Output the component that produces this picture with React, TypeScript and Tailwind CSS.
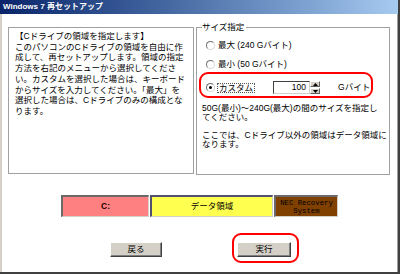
import { ReactNode } from "react"

const font = "font-['Liberation_Sans','Noto_Sans_CJK_JP',sans-serif]"

const leftLines = [
    "【Cドライブの領域を指定します】",
    "このパソコンのCドライブの領域を自由に作",
    "成して、再セットアップします。領域の指定",
    "方法を右記のメニューから選択してくださ",
    "い。カスタムを選択した場合は、キーボード",
    "からサイズを入力してください。「最大」を",
    "選択した場合は、Cドライブのみの構成とな",
    "ります。",
]

const Radio = ({ checked = false }: { checked?: boolean }) => (
    <span className="flex h-[9px] w-[9px] shrink-0 items-center justify-center rounded-full border border-t-[#707070] border-l-[#707070] border-b-[#d8d8d8] border-r-[#d8d8d8] bg-white">
        {checked && <span className="h-[3px] w-[3px] rounded-full bg-black" />}
    </span>
)

const RadioRow = ({ label }: { label: string }) => (
    <div className="ml-[4px] flex h-[12px] items-center gap-[3px]">
        <Radio />
        <span className="whitespace-nowrap">{label}</span>
    </div>
)

const Annotation = ({ className }: { className: string }) => (
    <span className={`pointer-events-none absolute rounded-[9px] border-2 border-[#ff0000] ${className}`} />
)

const Spinner = () => (
    <div className="flex h-[13px] w-[10px] flex-col gap-px">
        {[0, 1].map((i) => (
            <div
                key={i}
                className="flex flex-1 items-center justify-center border border-t-white border-l-white border-b-[#606060] border-r-[#606060] bg-[#d4d0c8]"
            >
                <svg width="5" height="3" viewBox="0 0 5 3">
                    <path d={i === 0 ? "M0 3 L2.5 0 L5 3 Z" : "M0 0 L5 0 L2.5 3 Z"} fill="#000" />
                </svg>
            </div>
        ))}
    </div>
)

const Block = ({ className, children }: { className: string, children: ReactNode }) => (
    <div className={`flex h-[22px] flex-col items-center justify-center border-t-2 border-l-2 border-b border-r border-b-[#d4d0c8] border-r-[#d4d0c8] ${className}`}>
        {children}
    </div>
)

const Button = ({ label, className = "" }: { label: string, className?: string }) => (
    <button className={`relative flex h-[15px] items-center justify-center border border-t-white border-l-white border-b-[#404040] border-r-[#404040] bg-[#d4d0c8] text-[8.5px] leading-none shadow-[inset_-1px_-1px_#808080] ${className}`}>
        {label}
    </button>
)

export default function App() {
    return (
        <div className={`flex h-[274px] w-[400px] flex-col overflow-hidden border-r-2 border-b-2 border-[#404040] bg-white text-black ${font}`}>
            <div className="flex h-[14px] shrink-0 items-center bg-gradient-to-r from-[#0a246a] to-[#a6caf0] pl-[3px] text-[8px] font-bold leading-none text-white">
                Windows 7 再セットアップ
            </div>

            <div className="flex flex-1 flex-col border-l-2 border-r border-l-[#d4d0c8] border-r-[#a0a0a0] pl-[6px] pt-[8px] text-[8.5px]">
                <div className="flex items-start gap-[2px]">
                    <div className="mt-[5px] h-[147px] w-[186px] border border-[#a0a0a0] pl-[6px] pt-[3px] leading-[10.7px]">
                        {leftLines.map((line) => (
                            <div key={line} className="whitespace-nowrap">{line}</div>
                        ))}
                    </div>

                    <fieldset className="h-[153px] w-[194px] border border-[#a0a0a0]">
                        <legend className="ml-[5px] pr-[2px] leading-[10px]">サイズ指定</legend>
                        <div className="flex flex-col pl-[5px]">
                            <div className="mt-[7px]">
                                <RadioRow label="最大 (240 Gバイト)" />
                            </div>
                            <div className="mt-[7px]">
                                <RadioRow label="最小 (50 Gバイト)" />
                            </div>

                            <div className="relative ml-[4px] mt-[11px] flex h-[13px] items-center">
                                <Annotation className="-left-[7px] -top-[9px] h-[26px] w-[174px]" />
                                <Radio checked />
                                <span className="ml-[2px] whitespace-nowrap border border-dotted border-[#555] px-px leading-[8px]">カスタム</span>
                                <div className="ml-[18px] flex h-[13px] w-[37px] items-center justify-end border border-t-[#404040] border-l-[#404040] border-b-[#d4d0c8] border-r-[#d4d0c8] bg-white pr-[3px] leading-none">
                                    100
                                </div>
                                <Spinner />
                                <span className="ml-[18px] whitespace-nowrap">Gバイト</span>
                            </div>

                            <div className="mt-[10px] leading-[9.3px]">
                                <div className="whitespace-nowrap">50G(最小)～240G(最大)の間のサイズを指定し</div>
                                <div className="whitespace-nowrap">てください。</div>
                            </div>
                            <div className="mt-[8px] leading-[9.3px]">
                                <div className="whitespace-nowrap">ここでは、Cドライブ以外の領域はデータ領域に</div>
                                <div className="whitespace-nowrap">なります。</div>
                            </div>
                        </div>
                    </fieldset>
                </div>

                <div className="ml-[53px] mt-[20px] flex">
                    <Block className="w-[88px] border-t-[#6a6a6a] border-l-[#6a6a6a] bg-[#ff8080] font-bold text-[#200]">
                        <span className="leading-none">C:</span>
                    </Block>
                    <Block className="ml-px w-[123px] border-t-[#505070] border-l-[#505070] bg-[#ffff50]">
                        <span className="leading-none">データ領域</span>
                    </Block>
                    <Block className="ml-px w-[64px] border-t-[#6a6a6a] border-l-[#6a6a6a] bg-[#804000] font-['Liberation_Mono',monospace] text-[7.3px] leading-[8px]">
                        <span>NEC Recovery</span>
                        <span>System</span>
                    </Block>
                </div>

                <div className="ml-[102px] mt-[25px] flex">
                    <Button label="戻る" className="w-[52px]" />
                    <div className="relative ml-[75px]">
                        <Annotation className="-left-[5px] -top-[9px] h-[30px] w-[67px]" />
                        <Button label="実行" className="w-[54px]" />
                    </div>
                </div>
            </div>
        </div>
    )
}
